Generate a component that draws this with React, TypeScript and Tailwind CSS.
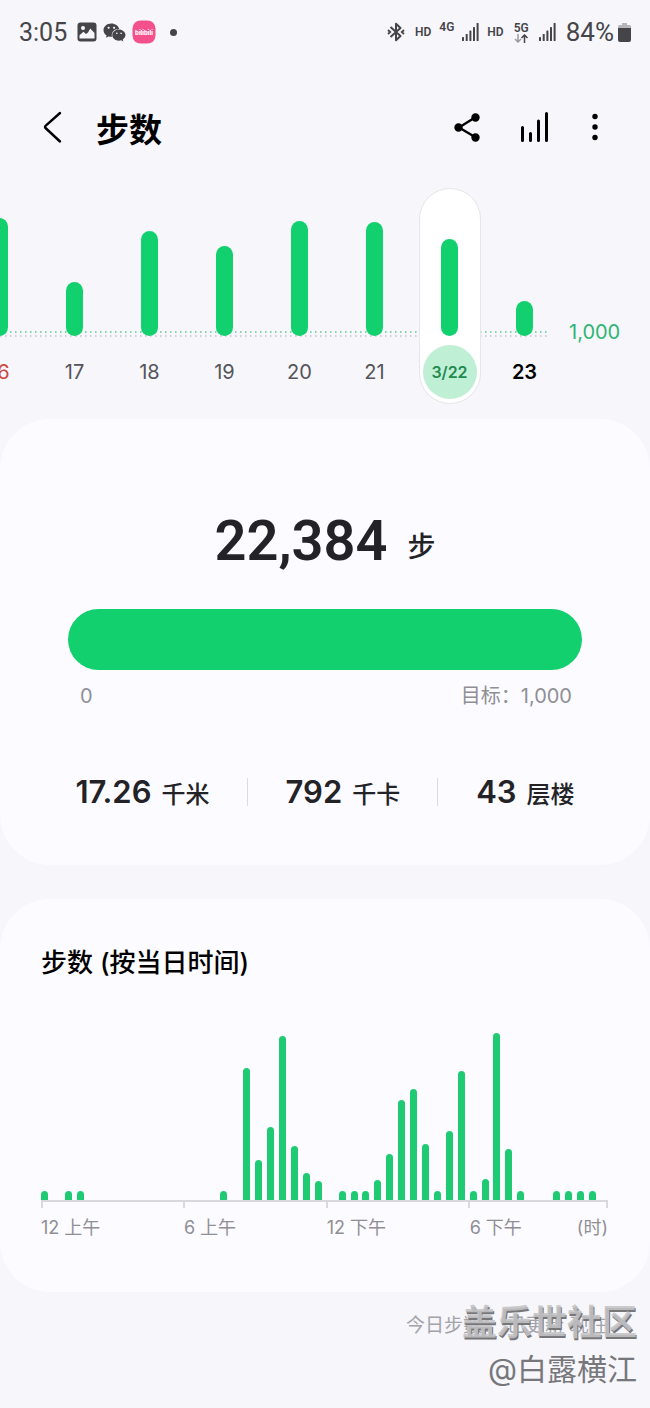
import React from "react";
import { FaWeixin } from "react-icons/fa";
import clsx from "clsx";

type Day = { label: string; height: number; tone?: "sunday" | "selected" | "today" };

const days: Day[] = [
  { label: "16", height: 118, tone: "sunday" },
  { label: "17", height: 54 },
  { label: "18", height: 105 },
  { label: "19", height: 90 },
  { label: "20", height: 115 },
  { label: "21", height: 114 },
  { label: "3/22", height: 97, tone: "selected" },
  { label: "23", height: 35, tone: "today" }
];

// One entry per half hour, starting at midnight
const halfHours = [
  9, 0, 9, 9, 0, 0, 0, 0, 0, 0, 0, 0,
  0, 0, 0, 9, 0, 132, 40, 73, 164, 54, 27, 19,
  0, 9, 9, 9, 20, 46, 100, 111, 56, 9, 69, 129,
  9, 21, 167, 51, 9, 0, 0, 9, 9, 9, 9, 0
];

const stats = [
  { value: "17.26", unit: "千米" },
  { value: "792", unit: "千卡" },
  { value: "43", unit: "层楼" }
];

function PictureIcon() {
  return (
    <svg width="20" height="20" viewBox="0 0 20 20" aria-hidden="true">
      <rect x="0.5" y="0.5" width="19" height="19" rx="3" fill="#454549" />
      <circle cx="6" cy="6" r="2" fill="#f6f6fb" />
      <path d="M2.5 16.5v-3.2l4-3.6 2.5 2.400 2-1.600 2.300-4 1.800 2 2.400 2.500v5.500z" fill="#f6f6fb" />
    </svg>
  );
}

function BilibiliIcon() {
  return (
    <svg width="24" height="24" viewBox="0 0 24 24" aria-hidden="true">
      <rect x="0.5" y="0.5" width="23" height="23" rx="8" fill="#f4518c" />
      <text x="12" y="14.500" textAnchor="middle" fontSize="6" fontWeight="800" fontFamily="Inter, sans-serif" fill="#fff">
        bilibili
      </text>
    </svg>
  );
}

function BluetoothIcon() {
  return (
    <svg width="18" height="20" viewBox="0 0 18 20" fill="none" stroke="#454549" strokeWidth="2" aria-hidden="true">
      <path d="M3.500 5 13.500 14l-4.500 4.200V1.800L13.500 6l-10 9" strokeLinejoin="round" />
      <path d="M1 8 3.200 10 1 12M17 8l-2.200 2L17 12" strokeWidth="1.800" />
    </svg>
  );
}

function SignalIcon() {
  return (
    <svg width="17" height="18" viewBox="0 0 17 18" fill="#454549" aria-hidden="true">
      <rect x="0" y="14" width="2" height="4" rx="0.6" />
      <rect x="3.7" y="11" width="2" height="7" rx="0.6" />
      <rect x="7.4" y="7.5" width="2" height="10.5" rx="0.6" />
      <rect x="11" y="4" width="2" height="14" rx="0.6" />
      <rect x="14.6" y="0" width="2" height="18" rx="0.6" />
    </svg>
  );
}

function BatteryIcon() {
  return (
    <svg width="13" height="19" viewBox="0 0 13 19" aria-hidden="true">
      <path d="M4 0h5v2h2.5A1.5 1.5 0 0 1 13 3.500V6H0V3.500A1.500 1.500 0 0 1 1.500 2H4z" fill="#b5b5ba" />
      <path d="M0 5h13v12a2 2 0 0 1-2 2H2a2 2 0 0 1-2-2z" fill="#454549" />
    </svg>
  );
}

function StatusBar() {
  return (
    <div className="flex h-16 items-center justify-between px-[19px] text-[#454549] font-[Roboto,sans-serif]">
      <div className="flex items-center">
        <span className="text-[25px] leading-none">3:05</span>
        <span className="ml-2.5 flex items-center gap-1.5">
          <PictureIcon />
          <FaWeixin size={23} />
          <BilibiliIcon />
        </span>
        <span className="ml-[14px] size-[7px] rounded-full bg-[#454549]" />
      </div>
      <div className="flex items-center text-[12px] font-semibold leading-none">
        <BluetoothIcon />
        <span className="ml-2.5">HD</span>
        <span className="ml-2 mb-2.5">4G</span>
        <span className="ml-2">
          <SignalIcon />
        </span>
        <span className="ml-2">HD</span>
        <span className="ml-2.5 flex flex-col items-center">
          5G
          <svg width="14" height="9" viewBox="0 0 14 9" fill="none" strokeWidth="1.500" aria-hidden="true">
            <path d="M4 0v8M1 5l3 3 3-3" stroke="#9a9aa0" />
            <path d="M10.500 9V1M7.500 4l3-3 3 3" stroke="#454549" />
          </svg>
        </span>
        <span className="ml-2.5">
          <SignalIcon />
        </span>
        <span className="ml-2.5 text-[26px] font-normal">84%</span>
        <span className="ml-1">
          <BatteryIcon />
        </span>
      </div>
    </div>
  );
}

function Header() {
  return (
    <header className="flex h-32 items-center px-10">
      <button type="button" aria-label="返回" className="flex w-14 items-center">
        <svg width="24" height="34" viewBox="0 0 24 34" fill="none" stroke="#000" strokeWidth="2.400" strokeLinecap="round" strokeLinejoin="round">
          <path d="M20 3 5.500 15.800a1.500 1.500 0 0 0 0 2.200L20 31.500" />
        </svg>
      </button>
      <h1 className="pt-1.5 text-[33px] font-bold leading-10 text-black">步数</h1>
      <div className="ml-auto flex items-center">
        <button type="button" aria-label="分享">
          <svg width="28" height="30" viewBox="0 0 28 30" stroke="#000" strokeWidth="2.400">
            <path d="M22 5.500 6 15.500l16 9.500" fill="none" />
            <circle cx="5.500" cy="15.500" r="3" />
            <circle cx="22.500" cy="5.500" r="3" />
            <circle cx="22.500" cy="25.500" r="3" />
          </svg>
        </button>
        <button type="button" aria-label="图表" className="ml-10">
          <svg width="28" height="30" viewBox="0 0 28 30" stroke="#000" strokeWidth="3" strokeLinecap="round">
            <path d="M1.500 15.500v13M9.500 21.500v7M17.500 9v19.500M25.500 1.500v27" />
          </svg>
        </button>
        <button type="button" aria-label="更多选项" className="ml-10 mr-[9px]">
          <svg width="12" height="30" viewBox="0 0 12 30">
            <circle cx="6" cy="4.500" r="2.700" />
            <circle cx="6" cy="15" r="2.700" />
            <circle cx="6" cy="25.500" r="2.700" />
          </svg>
        </button>
      </div>
    </header>
  );
}

function DayColumn({ day }: { day: Day }) {
  const selected = day.tone === "selected";

  return (
    <li className="flex w-[75px] shrink-0 justify-center">
      <button
        type="button"
        className={clsx(
          "flex w-[62px] flex-col items-center rounded-full border pb-1",
          selected ? "border-[#e6e6ea] bg-white" : "border-transparent"
        )}
      >
        <span className="flex h-[147px] items-end">
          <span className="w-[17px] rounded-full bg-[#13d06e]" style={{ height: day.height }} />
        </span>
        <span
          className={clsx(
            "mt-[9px] flex size-[54px] items-center justify-center rounded-full leading-none",
            selected && "bg-[#bff0d6] text-base font-semibold text-[#1f8a4f]",
            day.tone === "sunday" && "text-xl text-[#d0453f]",
            day.tone === "today" && "text-xl font-semibold text-black",
            !day.tone && "text-xl text-[#54545a]"
          )}
        >
          {day.label}
        </span>
      </button>
    </li>
  );
}

function DailyChart() {
  return (
    <section className="relative flex overflow-hidden">
      <svg className="absolute left-0 top-[142px]" width="550" height="8" aria-hidden="true">
        <path d="M0 2h550" stroke="#5fc796" strokeWidth="1.500" strokeDasharray="1.500 3.500" />
        <path d="M0 6h550" stroke="#c2c2c8" strokeWidth="1.500" strokeDasharray="1.500 3.500" />
      </svg>
      <ul className="relative -ml-[38px] flex">
        {days.map((day) => (
          <DayColumn key={day.label} day={day} />
        ))}
      </ul>
      <span className="mt-[132px] ml-[7px] text-xl leading-6 text-[#2fb573]">1,000</span>
    </section>
  );
}

function SummaryCard() {
  return (
    <section className="mt-[15px] rounded-[50px] bg-[#fcfbff] px-[68px] pt-[92px] pb-[59px]">
      <p className="flex items-end justify-center gap-5 text-[#232327]">
        <span className="text-[56px] font-semibold leading-[60px] font-[Roboto,sans-serif]">22,384</span>
        <span className="text-[28px] font-medium leading-[48px]">步</span>
      </p>

      <div className="mt-[38px] h-[61px] rounded-full bg-[#13d06e]" />
      <div className="mt-3 flex justify-between pl-3 pr-2.5 text-xl leading-7 text-[#8f8f94]">
        <span>0</span>
        <span>目标：1,000</span>
      </div>

      <dl className="mt-[68px] flex items-center justify-center text-[#232327]">
        {stats.map((stat, i) => (
          <div
            key={stat.unit}
            className={clsx("flex h-7 items-baseline whitespace-nowrap leading-7", i > 0 && "ml-[37px] border-l border-[#dcdce0] pl-[38px]")}
          >
            <dd className="text-[31px] leading-7 font-semibold">{stat.value}</dd>
            <dt className="ml-2.5 text-2xl leading-7 font-medium">{stat.unit}</dt>
          </div>
        ))}
      </dl>
    </section>
  );
}

function HourlyCard() {
  return (
    <section className="mt-[34px] rounded-[50px] bg-[#fcfbff] pl-[41px] pr-[42px] pt-[46px] pb-[50px]">
      <h2 className="text-[26px] font-medium leading-9 text-black">步数 (按当日时间)</h2>

      <div className="mt-[52px] flex h-[167px] items-end justify-between">
        {halfHours.map((height, i) => (
          <span key={i} className="w-[7px] rounded-t-full bg-[#1fcb72]" style={{ height }} />
        ))}
      </div>
      <div className="flex h-2 border-t-2 border-r-2 border-[#d9d9dd]">
        {[0, 6, 12, 18].map((hour) => (
          <span key={hour} className="w-[25.2%] shrink-0 border-l-2 border-[#d9d9dd] last:w-auto" />
        ))}
      </div>
      <div className="mt-1.5 flex text-lg leading-7 text-[#8f8f94] whitespace-nowrap">
        <span className="w-[25.2%]">12 上午</span>
        <span className="w-[25.2%]">6 上午</span>
        <span className="w-[25.2%]">12 下午</span>
        <span>6 下午</span>
        <span className="ml-auto">(时)</span>
      </div>
    </section>
  );
}

export default function App() {
  return (
    <main className="relative min-h-screen bg-[#f6f6fb] pb-[57px] font-[Inter,'Noto_Sans_CJK_SC',sans-serif]">
      <StatusBar />
      <div className="-mt-px">
        <Header />
      </div>
      <div className="-mt-[3px]">
        <DailyChart />
      </div>
      <SummaryCard />
      <HourlyCard />

      <p className="mt-5 flex justify-end gap-1.5 pr-[42px] text-[19px] leading-7 text-[#a3a3a9]">
        <span>今日步数：</span>
        <span>已更新</span>
        <span>现在</span>
      </p>

      {/* Community stamp over the footer line */}
      <div className="absolute bottom-4 right-[13px] text-right">
        <p className="text-[35px] font-bold leading-[48px] text-[#c4c4c6]/90 [text-shadow:1px_2px_0_#77777a]">盖乐世社区</p>
        <p className="text-[30px] leading-[46px] text-[#77777b]">@白露横江</p>
      </div>
    </main>
  );
}
